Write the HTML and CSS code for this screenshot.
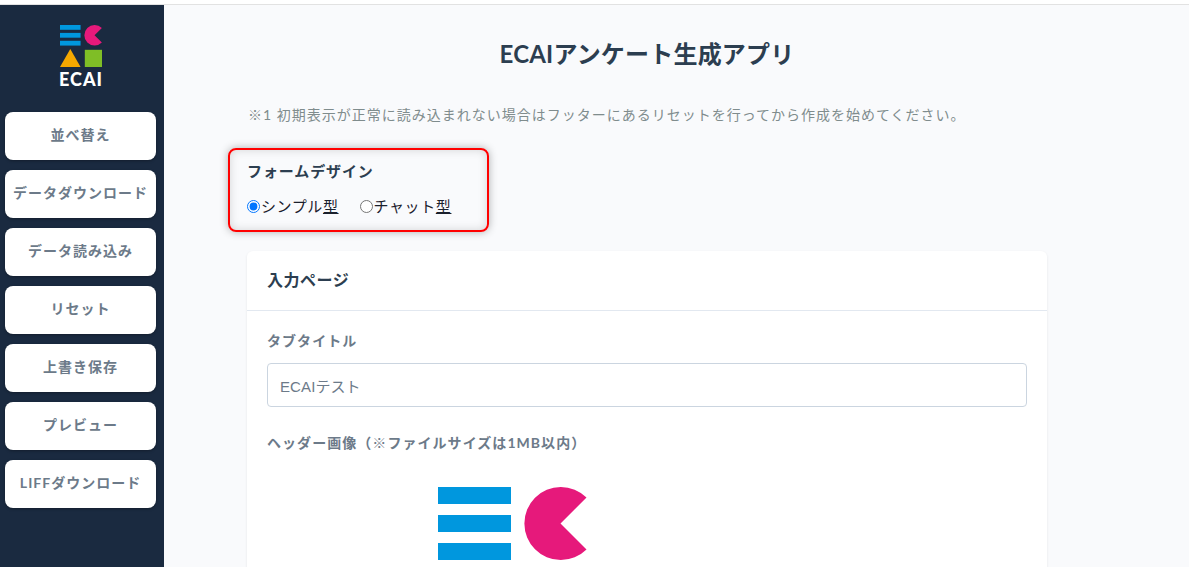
FILE: index.html
```html
<!DOCTYPE html>
<html lang="ja">
<head>
  <meta charset="UTF-8">
  <meta name="viewport" content="width=device-width, initial-scale=1.0">
  <title>ECAIアンケート生成アプリ</title>
  <link rel="stylesheet" href="styles.css">
</head>
<body>
  <svg class="defs" width="0" height="0">
    <symbol id="ecaiMark" viewBox="0 0 149 149">
      <rect x="0" y="0" width="73" height="17" fill="#0097de"/>
      <rect x="0" y="28" width="73" height="17" fill="#0097de"/>
      <rect x="0" y="56" width="73" height="17" fill="#0097de"/>
      <path d="M148.500 10.500A36.500 36.500 0 1 0 148.500 62.500L122.500 36.500Z" fill="#e6197b"/>
      <path d="M36.500 85L73 149H0Z" fill="#f5a800"/>
      <rect x="88" y="88" width="61" height="61" fill="#7fbe26"/>
    </symbol>
  </svg>

  <div class="app">
    <aside class="sidebar">
      <div class="brand">
        <svg class="brand-mark"><use href="#ecaiMark"/></svg>
        <div class="brand-name">ECAI</div>
      </div>
      <nav class="menu">
        <button class="menu-btn">並べ替え</button>
        <button class="menu-btn">データダウンロード</button>
        <button class="menu-btn">データ読み込み</button>
        <button class="menu-btn">リセット</button>
        <button class="menu-btn">上書き保存</button>
        <button class="menu-btn">プレビュー</button>
        <button class="menu-btn">LIFFダウンロード</button>
      </nav>
    </aside>

    <main class="content">
      <h1 class="page-title">ECAIアンケート生成アプリ</h1>
      <p class="note">※1 初期表示が正常に読み込まれない場合はフッターにあるリセットを行ってから作成を始めてください。</p>

      <section class="design-box">
        <h2 class="design-title">フォームデザイン</h2>
        <div class="radio-row">
          <label class="radio"><input type="radio" name="design" checked>シンプル<u>型</u></label>
          <label class="radio"><input type="radio" name="design">チャット<u>型</u></label>
        </div>
      </section>

      <section class="card">
        <div class="card-header">入力ページ</div>
        <div class="card-body">
          <label class="field-label" for="tabTitle">タブタイトル</label>
          <input class="text-input" id="tabTitle" type="text" value="ECAIテスト">
          <div class="field-label image-label">ヘッダー画像（※ファイルサイズは1MB以内）</div>
          <svg class="header-image"><use href="#ecaiMark"/></svg>
        </div>
      </section>
    </main>
  </div>
</body>
</html>
```

FILE: styles.css
```css
html, body {
  height: 100%;
  overflow: hidden;
}
body {
  margin: 0;
  background-color: #fff;
  font-family: "Lato", "Noto Sans CJK JP", sans-serif;
  color: #2c3e50;
}
.defs {
  display: block;
  position: absolute;
}
.app {
  display: flex;
  height: calc(100% - 5px);
  margin-top: 4px;
  border-top: 1px solid #e2e2e2;
  background-color: #f9fafc;
  overflow: hidden;
}
.sidebar {
  flex: 0 0 164px;
  background-color: #1a2a40;
}
.brand {
  display: flex;
  flex-direction: column;
  align-items: center;
  padding: 20px 2px 0 0;
  height: 107px;
  box-sizing: border-box;
}
.brand-mark {
  display: block;
  width: 42px;
  height: 42px;
}
.brand-name {
  color: #fff;
  font-family: "Lato", sans-serif;
  font-size: 18px;
  font-weight: 900;
  line-height: 24px;
  letter-spacing: 1px;
}
.menu {
  display: flex;
  flex-direction: column;
  gap: 10px;
  padding: 0 8px 0 5px;
}
.menu-btn {
  height: 48px;
  padding: 0 0 4px;
  border: none;
  border-radius: 8px;
  background-color: #fff;
  box-shadow: 0 1px 3px rgba(0, 0, 0, 0.3);
  color: #6c7a89;
  font-family: inherit;
  font-size: 14px;
  font-weight: 700;
  letter-spacing: 1px;
}
.content {
  flex: 1;
  min-height: 0;
  overflow: hidden;
  padding: 0 142px 0 83px;
}
.page-title {
  margin: 29px 0 0;
  text-align: center;
  font-size: 24px;
  font-weight: 700;
  line-height: 40px;
  letter-spacing: 0.2px;
  color: #2c3e50;
}
.note {
  margin: 31px 0 0 1px;
  font-size: 14px;
  line-height: 20px;
  letter-spacing: 1px;
  color: #7f8c8d;
}
.design-box {
  width: 261px;
  height: 84px;
  box-sizing: border-box;
  margin: 23px 0 0 -19px;
  padding: 11px 0 0 17px;
  border: 2px solid #f00;
  border-radius: 8px;
  box-shadow: 0 0 8px rgba(0, 0, 0, 0.3), inset 0 0 10px rgba(0, 0, 0, 0.15);
}
.design-title {
  margin: 0;
  font-size: 15px;
  font-weight: 700;
  line-height: 20px;
  letter-spacing: 0.9px;
}
.radio-row {
  display: flex;
  gap: 21px;
  margin-top: 15px;
}
.radio {
  display: flex;
  align-items: center;
  font-size: 15px;
  line-height: 20px;
  letter-spacing: 0.6px;
  color: #1a202c;
}
.radio input {
  width: 13px;
  height: 13px;
  margin: 0 1px 0 0;
}
.card {
  margin-top: 19px;
  width: 800px;
  border-radius: 6px;
  background-color: #fff;
  box-shadow: 0 1px 3px rgba(0, 0, 0, 0.08);
}
.card-header {
  height: 59px;
  padding-left: 20px;
  border-bottom: 1px solid #e2e8f0;
  font-size: 16px;
  font-weight: 700;
  line-height: 57px;
  letter-spacing: 0.5px;
}
.card-body {
  padding: 20px 20px 0;
}
.field-label {
  display: block;
  font-size: 14px;
  font-weight: 700;
  line-height: 20px;
  letter-spacing: 1.05px;
  color: #6c7a89;
}
.text-input {
  display: block;
  width: 100%;
  height: 44px;
  box-sizing: border-box;
  margin-top: 12px;
  padding: 0 12px;
  border: 1px solid #cbd5e0;
  border-radius: 4px;
  background-color: #fff;
  color: #6c7a89;
  font-family: "Liberation Sans", "Noto Sans CJK JP", sans-serif;
  font-size: 15px;
  letter-spacing: 0.1px;
}
.image-label {
  margin-top: 26px;
}
.header-image {
  display: block;
  width: 149px;
  height: 149px;
  margin: 34px 0 0 171px;
}
```
